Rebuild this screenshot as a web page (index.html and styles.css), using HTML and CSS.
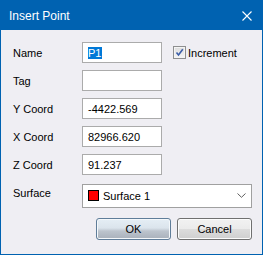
FILE: index.html
```html
<!DOCTYPE html>
<html>
<head>
<meta charset="utf-8">
<link rel="stylesheet" href="styles.css">
</head>
<body>
<div class="window">
  <div class="titlebar">
    <span class="title">Insert Point</span>
    <svg class="close" width="10" height="10" viewBox="0 0 10 10"><path d="M0.5 0.5 L9.5 9.5 M9.5 0.5 L0.5 9.5" stroke="#fff" stroke-width="1.1" fill="none"/></svg>
  </div>
  <div class="content">
    <div class="form">
      <label class="lbl">Name</label>
      <div class="field"><span class="sel">P1</span></div>
      <div class="check">
        <span class="box"><svg width="9" height="9" viewBox="0 0 9 9"><path d="M1.5 4.5 L3.5 7 L7.8 1.2" stroke="#3c5ea8" stroke-width="1.6" fill="none"/></svg></span>
        <span>Increment</span>
      </div>

      <label class="lbl">Tag</label>
      <div class="field"></div>
      <div></div>

      <label class="lbl">Y Coord</label>
      <div class="field">-4422.569</div>
      <div></div>

      <label class="lbl">X Coord</label>
      <div class="field">82966.620</div>
      <div></div>

      <label class="lbl">Z Coord</label>
      <div class="field">91.237</div>
      <div></div>

      <label class="lbl">Surface</label>
      <div class="combo">
        <span class="swatch"></span>
        <span class="combo-text">Surface 1</span>
        <svg class="chev" width="9" height="5" viewBox="0 0 9 5"><path d="M0.5 0.5 L4.5 4.3 L8.5 0.5" stroke="#606060" stroke-width="1" fill="none"/></svg>
      </div>
    </div>
    <div class="buttons">
      <button class="btn default">OK</button>
      <button class="btn">Cancel</button>
    </div>
  </div>
</div>
</body>
</html>
```

FILE: styles.css
```css
html, body {
  margin: 0;
  padding: 0;
  background: #efeef3;
}
.window {
  width: 263px;
  height: 255px;
  box-sizing: border-box;
  border: 1px solid #0062b1;
  border-top: 0;
  background: #efeef3;
  font-family: "Liberation Sans", Arial, sans-serif;
  font-size: 11px;
  color: #000;
  display: flex;
  flex-direction: column;
}
.titlebar {
  height: 30px;
  margin: 0 -1px;
  background: #0062b1;
  color: #fff;
  display: flex;
  align-items: center;
  justify-content: space-between;
  padding: 0 11px 0 9px;
}
.title {
  font-size: 12px;
  margin-top: 1px;
}
.close {
  display: block;
  margin-top: 1px;
}
.content {
  padding: 12px 10px 0 11px;
  display: flex;
  flex-direction: column;
}
.form {
  display: grid;
  grid-template-columns: 70px 80px 1fr;
  grid-auto-rows: 21px;
  row-gap: 7px;
  align-items: center;
}
.lbl {
  padding-left: 1px;
}
.field {
  box-sizing: border-box;
  height: 21px;
  border: 1px solid #ababab;
  background: #fff;
  padding: 0 0 0 5px;
  display: flex;
  align-items: center;
  white-space: nowrap;
}
.sel {
  background: #0078d7;
  color: #fff;
  padding: 0 1px 0 0;
  line-height: 12px;
}
.check {
  display: flex;
  align-items: center;
  padding-left: 11px;
}
.box {
  box-sizing: border-box;
  width: 13px;
  height: 13px;
  border: 1px solid #8e8f8f;
  background: linear-gradient(#dcdcdc, #f6f6f6);
  margin-right: 2px;
  display: flex;
  align-items: center;
  justify-content: center;
  box-shadow: inset 0 0 0 1px #f4f4f4;
}
.box svg { display: block; }
.combo {
  grid-column: 2 / 4;
  box-sizing: border-box;
  width: 170px;
  height: 24px;
  margin-top: 6px;
  border: 1px solid #a0a0a0;
  background: #fff;
  display: flex;
  align-items: center;
  padding: 0 5px 0 5px;
}
.swatch {
  box-sizing: border-box;
  width: 11px;
  height: 11px;
  background: #ff0000;
  border: 1px solid #000;
  margin-right: 4px;
}
.combo-text {
  flex: 1;
  font-size: 11px;
}
.chev { display: block; }
.buttons {
  display: flex;
  justify-content: flex-end;
  gap: 6px;
  margin-top: 15px;
}
.btn {
  box-sizing: border-box;
  width: 75px;
  height: 22px;
  border: 1px solid #707070;
  border-radius: 3px;
  font-family: "Liberation Sans", Arial, sans-serif;
  font-size: 11px;
  color: #000;
  padding: 0;
  background: linear-gradient(#f2f2f2 0%, #ebebeb 50%, #dddddd 50%, #cfcfcf 100%);
  box-shadow: inset 0 0 0 1px #fcfcfc;
}
.btn.default {
  border-color: #5f7d99;
  background: linear-gradient(#e5eef5 0%, #dbe4ec 45%, #bcc4cd 60%, #a9b1bb 100%);
  box-shadow: inset 0 0 0 1px #f4f8fb;
}
```
